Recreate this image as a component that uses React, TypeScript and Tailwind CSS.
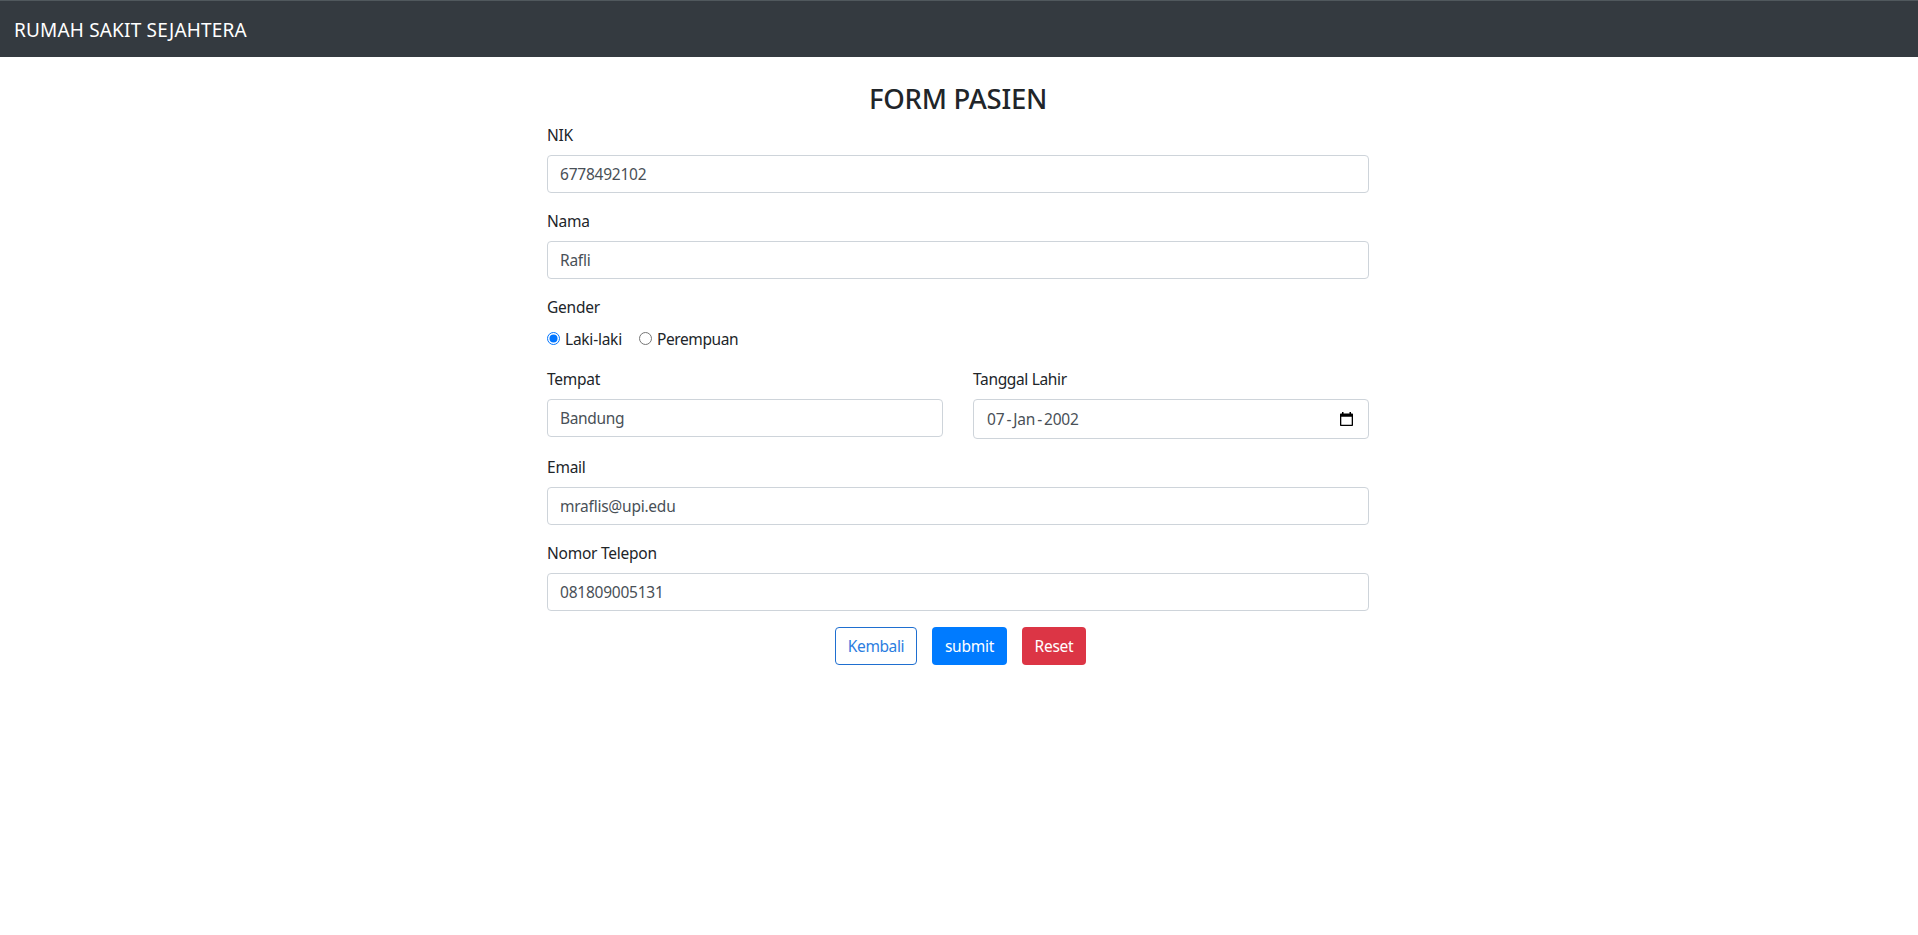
import type { ReactNode } from "react";

const inputClass =
  "w-full rounded-[4px] border border-[#ced4da] bg-white px-3 text-[#495057]";

function Label({ children, className = "" }: { children: ReactNode; className?: string }) {
  return (
    <div className="mb-2 flex h-6 items-center whitespace-nowrap">
      <span className={`leading-6 ${className}`}>{children}</span>
    </div>
  );
}

function Field({ label, value, valueClass = "" }: { label: string; value: string; valueClass?: string }) {
  return (
    <div>
      <Label>{label}</Label>
      <div className={`flex h-[38px] items-center pt-[2px] ${inputClass}`}>
        <span className={valueClass}>{value}</span>
      </div>
    </div>
  );
}

function Radio({ checked }: { checked?: boolean }) {
  return (
    <svg width="13" height="13" viewBox="0 0 13 13" className="mb-[1px] shrink-0">
      <circle cx="6.5" cy="6.5" r="6" fill="#fff" stroke={checked ? "#0075ff" : "#767676"} />
      {checked && <circle cx="6.5" cy="6.5" r="4" fill="#0075ff" />}
    </svg>
  );
}

function CalendarIcon() {
  return (
    <svg width="13" height="14" viewBox="0 0 13 14" className="mr-[3px] mb-[2px]">
      <path
        fill="#000"
        fillRule="evenodd"
        d="M2 0h1.500v1.500h6V0H11v1.500h1c.6 0 1 .4 1 1V13c0 .6-.4 1-1 1H1c-.6 0-1-.4-1-1V2.500c0-.6.4-1 1-1h1zM1.300 4.800v8h10.400v-8z"
      />
    </svg>
  );
}

export default function App() {
  return (
    <div className="min-h-[935px] bg-white font-['Noto_Sans','Open_Sans',sans-serif] text-[15.5px] tracking-[-0.24px] text-[#212529]">
      <nav className="flex h-[57px] items-center border-t border-[#50585d] bg-[#343a40] px-[14px] text-[19px] tracking-[0.18px] whitespace-nowrap text-white">
        <span className="pt-[2px]">RUMAH SAKIT SEJAHTERA</span>
      </nav>
      <main className="ml-[547px] flex w-[822px] flex-col gap-4 pt-6">
        <div>
          <h3 className="mb-[7px] pt-[1px] text-center text-[27.5px] leading-[34px] font-medium whitespace-nowrap">
            FORM PASIEN
          </h3>
          <Field label="NIK" value="6778492102" />
        </div>
        <Field label="Nama" value="Rafli" />
        <div>
          <Label>Gender</Label>
          <div className="flex h-6 items-center">
            <Radio checked />
            <span className="ml-[5px] w-[74px] pt-[2px] whitespace-nowrap">Laki-laki</span>
            <Radio />
            <span className="ml-[5px] pt-[2px] tracking-[-0.4px] whitespace-nowrap">Perempuan</span>
          </div>
        </div>
        <div className="grid grid-cols-2 gap-[30px]">
          <Field label="Tempat" value="Bandung" valueClass="tracking-[-0.35px]" />
          <div>
            <Label className="tracking-[-0.34px]">Tanggal Lahir</Label>
            <div className={`flex h-10 items-center justify-between pt-[2px] ${inputClass}`}>
              <span className="ml-[1px] flex">
                <span>07</span>
                <span className="w-[9px] text-center">-</span>
                <span>Jan</span>
                <span className="w-[9px] text-center">-</span>
                <span>2002</span>
              </span>
              <CalendarIcon />
            </div>
          </div>
        </div>
        <Field label="Email" value="mraflis@upi.edu" />
        <Field label="Nomor Telepon" value="081809005131" />
        <div className="ml-[288px] flex gap-[15px]">
          <button className="h-[38px] w-[82px] rounded-[4px] border border-[#1f6fd0] pt-[2px] tracking-[-0.4px] text-[#2b7de0]">
            Kembali
          </button>
          <button className="h-[38px] w-[75px] rounded-[4px] bg-[#007bff] pt-[2px] text-white">submit</button>
          <button className="h-[38px] w-[64px] rounded-[4px] bg-[#dc3545] pt-[2px] text-white">Reset</button>
        </div>
      </main>
    </div>
  );
}
